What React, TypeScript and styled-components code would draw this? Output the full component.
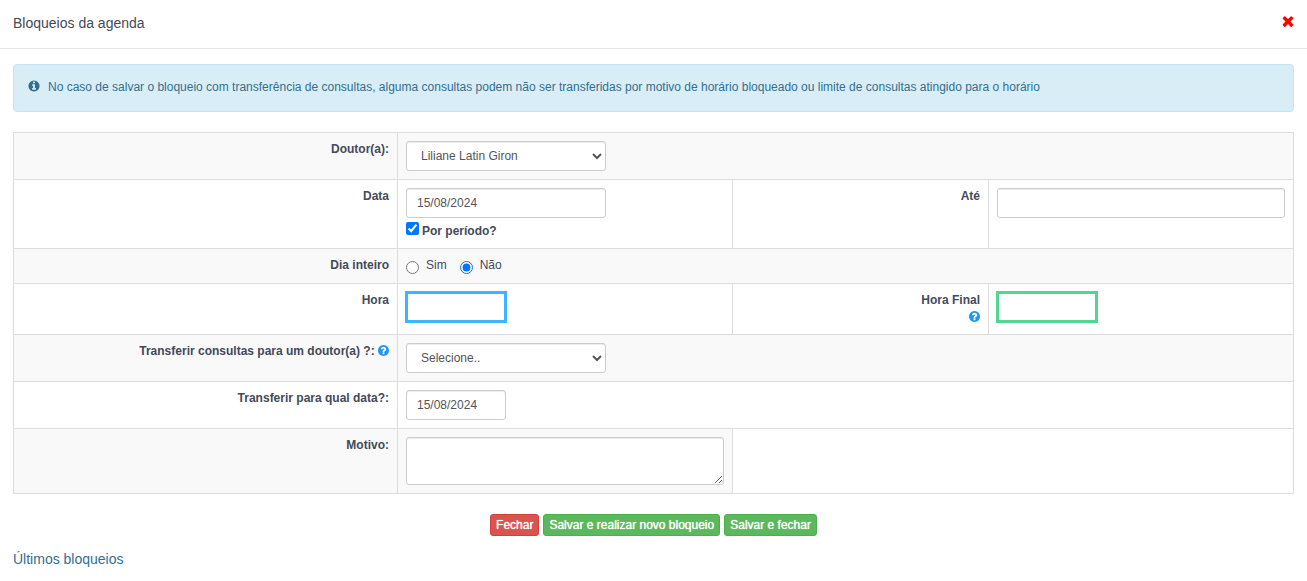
import React from "react";
import styled, { createGlobalStyle, css } from "styled-components";

const GlobalStyle = createGlobalStyle`
  * { box-sizing: border-box; }
  body {
    margin: 0;
    background: #fff;
    color: #444a59;
    font-family: "Liberation Sans", Arial, sans-serif;
    font-size: 12px;
    line-height: 17px;
  }
  input, select, textarea, button { font-family: inherit; }
`;

const Header = styled.header`
  display: flex;
  align-items: flex-start;
  justify-content: space-between;
  padding: 13px 11px 15px 13px;
  border-bottom: 1px solid #e5e5e5;
`;

const Title = styled.h1`
  margin: 0;
  font-size: 14px;
  font-weight: 400;
  line-height: 20px;
`;

const CloseButton = styled.button`
  display: flex;
  padding: 0;
  border: 0;
  background: none;
  color: #f00;
  cursor: pointer;
`;

const Content = styled.main`
  padding: 15px 13px 0;
`;

const Alert = styled.div`
  display: flex;
  align-items: flex-start;
  gap: 8px;
  margin-bottom: 20px;
  padding: 14px 14px 15px;
  border: 1px solid #bce8f1;
  border-radius: 4px;
  background: #d9edf7;
  color: #31708f;
  svg { flex: none; margin-top: 1px; }
`;

const Table = styled.table`
  width: 100%;
  table-layout: fixed;
  border-collapse: collapse;
  border: 1px solid #ddd;
`;

const Column = styled.col<{ $width?: string }>`
  width: ${(p) => p.$width ?? "auto"};
`;

const Row = styled.tr<{ $striped?: boolean }>`
  background: ${(p) => (p.$striped ? "#f9f9f9" : "#fff")};
`;

const cell = css`
  padding: 8px;
  border: 1px solid #ddd;
  vertical-align: top;
`;

const LabelCell = styled.th`
  ${cell}
  text-align: right;
  font-weight: 700;
`;

const Cell = styled.td<{ $blank?: boolean }>`
  ${cell}
  ${(p) => p.$blank && "background: #fff;"}
`;

const field = css`
  display: block;
  height: 30px;
  border: 1px solid #ccc;
  border-radius: 3px;
  background: #fff;
  box-shadow: inset 0 1px 1px rgba(0, 0, 0, 0.075);
  color: #555;
  font-size: 12px;
  line-height: 18px;
`;

const TextInput = styled.input<{ $width?: string; $highlight?: string }>`
  ${field}
  width: ${(p) => p.$width ?? "100%"};
  padding: 5px 10px;
  ${(p) =>
    p.$highlight &&
    css`
      border: 2px solid ${p.$highlight};
      border-radius: 0;
      box-shadow: 0 0 0 1px ${p.$highlight};
    `}
`;

const Select = styled.select`
  ${field}
  width: 200px;
  padding: 5px 0 5px 10px;
`;

const TextArea = styled.textarea`
  ${field}
  width: 100%;
  height: 48px;
  padding: 5px 10px;
  resize: vertical;
`;

const CheckLabel = styled.label`
  display: flex;
  gap: 3px;
  padding-top: 4px;
  font-weight: 700;
`;

const CheckBox = styled.input`
  width: 13px;
  height: 13px;
  margin: 0;
`;

const CheckText = styled.span`
  padding-top: 1px;
`;

const RadioGroup = styled.div`
  display: flex;
  gap: 13px;
  height: 18px;
`;

const RadioLabel = styled.label`
  display: flex;
  gap: 7px;
`;

const Radio = styled.input`
  width: 13px;
  height: 13px;
  margin: 4px 0 0;
`;

const HelpIcon = styled.svg`
  color: #2196f3;
  vertical-align: -1px;
`;

const Actions = styled.div`
  display: flex;
  justify-content: center;
  gap: 4px;
  margin: 20px 0 13px;
`;

const Button = styled.button<{ $tone: "danger" | "success" }>`
  height: 22px;
  padding: 0 5px;
  border: 1px solid ${(p) => (p.$tone === "danger" ? "#d43f3a" : "#4cae4c")};
  border-radius: 3px;
  background: ${(p) => (p.$tone === "danger" ? "#d9534f" : "#5cb85c")};
  color: #fff;
  font-size: 12px;
  font-weight: 400;
  line-height: 18px;
  text-shadow: 0 0 1px #fff;
  cursor: pointer;
`;

const HistoryLink = styled.a`
  color: #31708f;
  font-size: 14px;
  line-height: 20px;
  text-decoration: none;
`;

function Info() {
  return (
    <svg width="12" height="12" viewBox="64 64 1664 1664" fill="currentColor" aria-hidden="true">
      <path d="M1152 1376v-160q0-14-9-23t-23-9h-96v-512q0-14-9-23t-23-9h-320q-14 0-23 9t-9 23v160q0 14 9 23t23 9h96v320h-96q-14 0-23 9t-9 23v160q0 14 9 23t23 9h448q14 0 23-9t9-23zm-128-896v-160q0-14-9-23t-23-9h-192q-14 0-23 9t-9 23v160q0 14 9 23t23 9h192q14 0 23-9t9-23zm640 416q0 209-103 385.5t-279.5 279.5-385.5 103-385.5-103-279.5-279.5-103-385.5 103-385.5 279.5-279.5 385.5-103 385.5 103 279.5 279.5 103 385.5z" />
    </svg>
  );
}

function Help() {
  return (
    <HelpIcon width="11" height="11" viewBox="128 128 1536 1536" fill="currentColor" role="img" aria-label="Ajuda">
      <path d="M1024 1376v-192q0-14-9-23t-23-9h-192q-14 0-23 9t-9 23v192q0 14 9 23t23 9h192q14 0 23-9t9-23zm256-672q0-88-55.5-163t-138.5-116-170-41q-243 0-371 213-15 24 8 42l132 100q7 6 19 6 16 0 25-12 53-68 86-92 34-24 86-24 48 0 85.5 26t37.5 59q0 38-20 61t-68 45q-63 28-115.5 86.5t-52.5 125.5v36q0 14 9 23t23 9h192q14 0 23-9t9-23q0-19 21.5-49.5t54.5-49.5q32-18 49-28.5t46-35 44.5-48 28-60.5 12.5-81zm384 192q0 209-103 385.5t-279.5 279.5-385.5 103-385.5-103-279.5-279.5-103-385.5 103-385.5 279.5-279.5 385.5-103 385.5 103 279.5 279.5 103 385.5z" />
    </HelpIcon>
  );
}

export default function App() {
  return (
    <>
      <GlobalStyle />
      <Header>
        <Title>Bloqueios da agenda</Title>
        <CloseButton type="button" aria-label="Fechar">
          <svg width="16" height="16" viewBox="0 0 1792 1792" fill="currentColor" aria-hidden="true">
            <path d="M1490 1322q0 40-28 68l-136 136q-28 28-68 28t-68-28l-294-294-294 294q-28 28-68 28t-68-28l-136-136q-28-28-28-68t28-68l294-294-294-294q-28-28-28-68t28-68l136-136q28-28 68-28t68 28l294 294 294-294q28-28 68-28t68 28l136 136q28 28 28 68t-28 68l-294 294 294 294q28 28 28 68z" />
          </svg>
        </CloseButton>
      </Header>
      <Content>
        <Alert role="alert">
          <Info />
          <span>
            No caso de salvar o bloqueio com transferência de consultas, alguma consultas podem não ser
            transferidas por motivo de horário bloqueado ou limite de consultas atingido para o horário
          </span>
        </Alert>
        <Table>
          <colgroup>
            <Column $width="30%" />
            <Column />
            <Column $width="20%" />
            <Column $width="305px" />
          </colgroup>
          <tbody>
            <Row $striped>
              <LabelCell scope="row">
                <label htmlFor="doutor">Doutor(a):</label>
              </LabelCell>
              <Cell colSpan={3}>
                <Select id="doutor">
                  <option>Liliane Latin Giron</option>
                </Select>
              </Cell>
            </Row>
            <Row>
              <LabelCell scope="row">
                <label htmlFor="data">Data</label>
              </LabelCell>
              <Cell>
                <TextInput id="data" $width="200px" defaultValue="15/08/2024" />
                <CheckLabel>
                  <CheckBox type="checkbox" defaultChecked />
                  <CheckText>Por período?</CheckText>
                </CheckLabel>
              </Cell>
              <LabelCell scope="row">
                <label htmlFor="ate">Até</label>
              </LabelCell>
              <Cell>
                <TextInput id="ate" />
              </Cell>
            </Row>
            <Row $striped>
              <LabelCell scope="row">Dia inteiro</LabelCell>
              <Cell colSpan={3}>
                <RadioGroup role="radiogroup" aria-label="Dia inteiro">
                  <RadioLabel>
                    <Radio type="radio" name="dia" />
                    Sim
                  </RadioLabel>
                  <RadioLabel>
                    <Radio type="radio" name="dia" defaultChecked />
                    Não
                  </RadioLabel>
                </RadioGroup>
              </Cell>
            </Row>
            <Row>
              <LabelCell scope="row">
                <label htmlFor="hora">Hora</label>
              </LabelCell>
              <Cell>
                <TextInput id="hora" $width="100px" $highlight="#3db5fa" />
              </Cell>
              <LabelCell scope="row">
                <label htmlFor="hora-final">Hora Final</label>
                <br />
                <Help />
              </LabelCell>
              <Cell>
                <TextInput id="hora-final" $width="100px" $highlight="#54d596" />
              </Cell>
            </Row>
            <Row $striped>
              <LabelCell scope="row">
                <label htmlFor="transferir">Transferir consultas para um doutor(a) ?:</label> <Help />
              </LabelCell>
              <Cell colSpan={3}>
                <Select id="transferir">
                  <option>Selecione..</option>
                </Select>
              </Cell>
            </Row>
            <Row>
              <LabelCell scope="row">
                <label htmlFor="nova-data">Transferir para qual data?:</label>
              </LabelCell>
              <Cell colSpan={3}>
                <TextInput id="nova-data" $width="100px" defaultValue="15/08/2024" />
              </Cell>
            </Row>
            <Row $striped>
              <LabelCell scope="row">
                <label htmlFor="motivo">Motivo:</label>
              </LabelCell>
              <Cell>
                <TextArea id="motivo" />
              </Cell>
              <Cell colSpan={2} $blank />
            </Row>
          </tbody>
        </Table>
        <Actions>
          <Button type="button" $tone="danger">Fechar</Button>
          <Button type="button" $tone="success">Salvar e realizar novo bloqueio</Button>
          <Button type="button" $tone="success">Salvar e fechar</Button>
        </Actions>
        <HistoryLink href="#ultimos">Últimos bloqueios</HistoryLink>
      </Content>
    </>
  );
}
